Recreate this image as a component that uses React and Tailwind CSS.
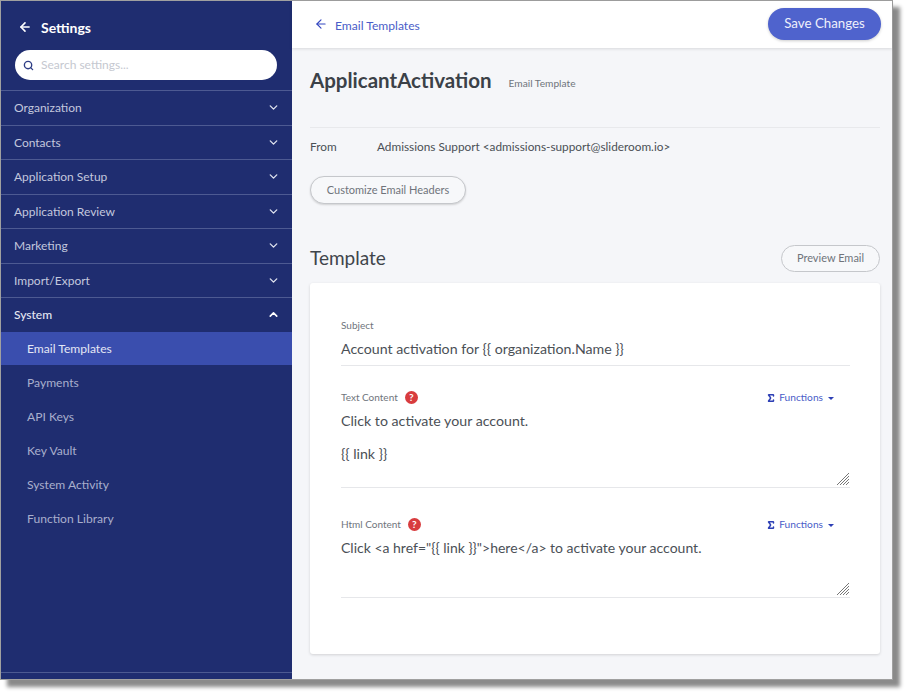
import React from "react";
import { ChevronDown, ChevronUp, ArrowLeft, Search, Sigma } from "lucide-react";

const sections = ["Organization", "Contacts", "Application Setup", "Application Review", "Marketing", "Import/Export"];
const subs = ["Payments", "API Keys", "Key Vault", "System Activity", "Function Library"];

function Help() {
  return (
    <span className="flex h-[13px] w-[13px] items-center justify-center rounded-full bg-[#d83c3e] text-[10px] font-bold leading-none text-white">?</span>
  );
}

function Functions() {
  return (
    <div className="flex items-center pt-[2px] text-[10.2px] text-[#4a5cc8]">
      <Sigma size={10} strokeWidth={3.5} className="text-[#2d3fb5]" />
      <span className="ml-[3px]">Functions</span>
      <span className="ml-[5px] h-0 w-0 border-x-[3px] border-t-[3px] border-x-transparent border-t-[#2d3fb5]" />
    </div>
  );
}

function Grip() {
  return (
    <svg width="13" height="13" viewBox="0 0 13 13" className="absolute bottom-[1px] right-0 text-[#777]" stroke="currentColor" strokeWidth="1">
      <path d="M12 0 0 12M12 3 3 12M12 6 6 12M12 9 9 12" />
    </svg>
  );
}

export default function App() {
  return (
    <div className="h-[693px] w-[905px] overflow-hidden bg-white font-['Lato','Open_Sans',sans-serif]">
      <div className="flex h-[680px] w-[893px] border border-[#a0a0a0] shadow-[7px_7px_4px_#8a8a8a]">
        <aside className="flex w-[291px] shrink-0 flex-col bg-[#1f2d70]">
          <div className="flex h-[49px] items-center gap-[9px] pl-[17px] pt-[3px] text-white">
            <ArrowLeft size={14} strokeWidth={2.75} />
            <span className="text-[14px] font-bold">Settings</span>
          </div>
          <div className="ml-[14px] mr-[15px] flex h-[30px] items-center rounded-full bg-white pl-[8px]">
            <Search size={11} strokeWidth={3} className="text-[#2f3e86]" />
            <span className="ml-[7px] text-[12px] text-[#c5c8d0]">Search settings...</span>
          </div>
          <div className="mt-[10px]">
            {sections.map((s) => (
              <div key={s} className="flex h-[34.5px] items-center justify-between border-t border-[#4d5a92] pl-[13px] pr-[12px] text-[12px] text-[#c3c8de]">
                <span className="pt-[0.5px]">{s}</span>
                <ChevronDown size={13} strokeWidth={2.5} className="text-[#dfe2ee]" />
              </div>
            ))}
            <div className="flex h-[34.5px] items-center justify-between border-t border-[#4d5a92] pl-[13px] pr-[12px] text-[12px] font-medium text-[#e4e7f2]">
              <span className="pt-[0.5px]">System</span>
              <ChevronUp size={13} strokeWidth={3} className="text-white" />
            </div>
            <div className="flex h-[33px] items-center bg-[#3a4eae] pl-[26px] pt-[2px] text-[12.1px] text-[#e4e7f5]">Email Templates</div>
            {subs.map((s) => (
              <div key={s} className="flex h-[34px] items-center pl-[26px] pt-[4px] text-[12.1px] text-[#a9afcd]">{s}</div>
            ))}
          </div>
          <div className="mb-[6px] mt-auto border-t border-[#4d5a92]" />
        </aside>

        <main className="flex min-w-0 flex-1 flex-col bg-[#f5f6f9]">
          <header className="flex h-[47px] shrink-0 items-center justify-between bg-white pl-[22px] pr-[11px] shadow-[0_1px_3px_rgba(0,0,0,0.12)]">
            <div className="flex items-center gap-[7px] text-[12.1px] text-[#4a5cc8]">
              <ArrowLeft size={14} strokeWidth={2} className="text-[#3346c0]" />
              <span className="pt-[3px]">Email Templates</span>
            </div>
            <button className="mb-[2px] h-[32px] w-[113px] rounded-full bg-[#4f63cd] pt-[1px] text-[13.3px] text-[#eef0fb] shadow-[0_1px_3px_rgba(0,0,0,0.2)]">Save Changes</button>
          </header>

          <div className="flex flex-1 flex-col pl-[18px] pr-[12px]">
            <div className="mt-[19px] flex h-[26px] items-center">
              <h1 className="text-[20.5px] font-bold text-[#3b4148]">ApplicantActivation</h1>
              <span className="ml-[17px] pt-[8px] text-[10.2px] text-[#6f757c]">Email Template</span>
            </div>
            <div className="mt-[34px] border-t border-[#e8e9ec]" />
            <div className="mt-[10px] flex h-[18px] items-center text-[11.8px] text-[#4b5056]">
              <span className="w-[67px]">From</span>
              <span>Admissions Support &lt;admissions-support@slideroom.io&gt;</span>
            </div>
            <button className="mt-[20px] h-[28px] w-[156px] rounded-full border border-[#c5c7cb] bg-[#f7f8fa] text-[11px] text-[#6f747b] shadow-[0_1px_2px_rgba(0,0,0,0.15)]">Customize Email Headers</button>
            <div className="mt-[41px] flex h-[27px] items-center justify-between">
              <h2 className="text-[19px] text-[#3f454b]">Template</h2>
              <button className="h-[27px] w-[99px] rounded-full border border-[#c5c7cb] bg-[#f7f8fa] text-[11px] text-[#6f747b]">Preview Email</button>
            </div>
            <section className="mt-[11px] h-[371px] rounded-[3px] bg-white pl-[31px] pr-[30px] pt-[36px] shadow-[0_1px_3px_rgba(0,0,0,0.15)]">
              <div className="text-[10px] leading-[13px] text-[#6f757c]">Subject</div>
              <div className="flex h-[34px] items-center border-b border-[#e6e7ea] pb-[3px] pt-[3px] text-[14.2px] text-[#4b5056]">Account activation for {"{{ organization.Name }}"}</div>

              <div className="mt-[23px] flex h-[16px] items-center justify-between">
                <div className="flex items-center gap-[7px] text-[10px] text-[#6f757c]">Text Content <Help /></div>
                <div className="pr-[16px]"><Functions /></div>
              </div>
              <div className="relative mt-[6px] h-[77px] border-b border-[#e6e7ea] text-[14.2px] text-[#4b5056]">
                <div className="pt-[1px] leading-[17px]">Click to activate your account.</div>
                <div className="mt-[16px] leading-[17px]">{"{{ link }}"}</div>
                <Grip />
              </div>

              <div className="mt-[28px] flex h-[16px] items-center justify-between">
                <div className="flex items-center gap-[7px] text-[10px] text-[#6f757c]">Html Content <Help /></div>
                <div className="pr-[16px]"><Functions /></div>
              </div>
              <div className="relative mt-[6px] h-[60px] border-b border-[#e6e7ea] text-[14px] text-[#4b5056]">
                <div className="pt-[1px] leading-[17px]">Click &lt;a href="{"{{ link }}"}"&gt;here&lt;/a&gt; to activate your account.</div>
                <Grip />
              </div>
            </section>
          </div>
        </main>
      </div>
    </div>
  );
}
